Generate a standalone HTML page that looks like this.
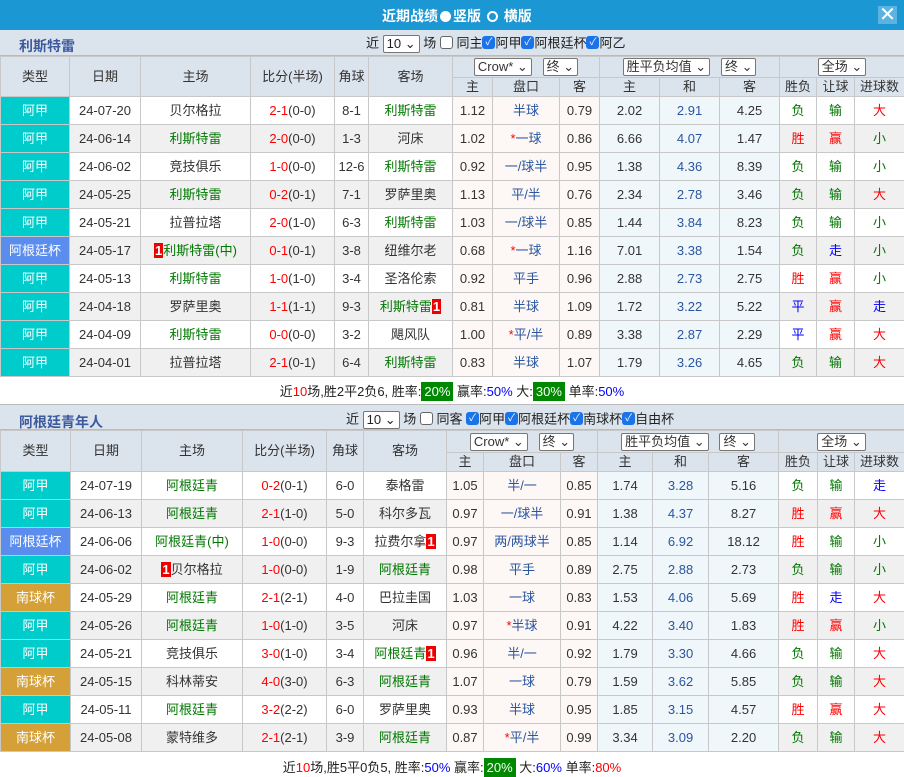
<!DOCTYPE html>
<html><head><meta charset="utf-8"><style>
*{margin:0;padding:0;box-sizing:border-box}
body{width:904px;height:776px;overflow:hidden;background:#fff;font-family:"Liberation Sans","Noto Sans CJK SC",sans-serif;font-size:13px;color:#333;position:relative}
.top{position:absolute;left:0;top:0;width:904px;height:30px;background:#1b97d4;color:#fff;font-weight:bold;font-size:14px}
.top .t{position:absolute;left:382px;top:6px;white-space:nowrap}
.rad{display:inline-block;width:11px;height:11px;border-radius:50%;background:#fff;vertical-align:-1px;margin:0 2px}
.rad.o{background:none;border:2px solid #fff}
.x{position:absolute;left:878px;top:6px;width:19px;height:18px;background:#5cb3e2;color:#fff;font-size:20px;line-height:18px;text-align:center;font-weight:normal}
.sh{position:absolute;left:0;width:904px;height:26px;background:#dbe3ec;border-bottom:1px solid #bbb}
.sh b{position:absolute;left:19px;top:6px;color:#3d5a9e;font-size:14px}
.sh .c{position:absolute;top:5px;white-space:nowrap;font-size:13px;color:#222;line-height:16px}
.sel{display:inline-block;border:1px solid #777;background:#fff;height:18px;line-height:16px;padding:0 3px;font-size:13px;vertical-align:middle;border-radius:2px}
.cb{display:inline-block;width:13px;height:13px;border-radius:3px;vertical-align:-2px;background:#1a73e8;color:#fff;font-size:10px;line-height:13px;text-align:center;overflow:hidden}
.cb.e{background:#fff;border:1px solid #666}
table{position:absolute;left:0;border-collapse:collapse;table-layout:fixed;width:904px}
td{border:1px solid #c8c8c8;text-align:center;white-space:nowrap;overflow:hidden;height:28px;padding:0;line-height:16px}
thead td{background:#dbe3ec;color:#333;height:21px}
thead td.h2{height:19px}
.g{color:#070}.r{color:#f00}.b{color:#00f}.hb{color:#2a55a0}
.aj{background:#00cccc;color:#fff}.ag{background:#5b8def;color:#fff}.nq{background:#d4a037;color:#fff}
tbody tr:nth-child(even) td{background:#f0f0f0}
tbody td.p{background:#fdf8f5!important}
tbody td.q{background:#f0f7fb!important}
tbody tr td.aj{background:#00cccc!important}tbody tr td.ag{background:#5b8def!important}tbody tr td.nq{background:#d4a037!important}
.n{background:#e00;color:#fff;font-weight:bold;padding:0 1px}
.sum{position:absolute;left:0;width:904px;text-align:center;font-size:13px;color:#222}
.gb{background:#080;color:#fff;padding:2px 3px}
</style></head><body>
<div class="top"><span class="t">近期战绩<span class="rad"></span>竖版 <span class="rad o"></span> 横版</span><div class="x">✕</div></div>
<div class="sh" style="top:30px"><b>利斯特雷</b><span class="c" style="left:366px">近 <span class="sel">10 ⌄</span> 场 <span class="cb e"></span> 同主<span class="cb">✓</span>阿甲<span class="cb">✓</span>阿根廷杯<span class="cb">✓</span>阿乙</span></div>
<table style="top:56px">
<colgroup><col style="width:69px"><col style="width:71px"><col style="width:110px"><col style="width:84px"><col style="width:34px"><col style="width:84px"><col style="width:40px"><col style="width:67px"><col style="width:40px"><col style="width:60px"><col style="width:60px"><col style="width:60px"><col style="width:37px"><col style="width:38px"><col style="width:50px"></colgroup>
<thead><tr><td rowspan="2">类型</td><td rowspan="2">日期</td><td rowspan="2">主场</td><td rowspan="2">比分(半场)</td><td rowspan="2">角球</td><td rowspan="2">客场</td><td colspan="3"><span class="sel">Crow* ⌄</span> &nbsp; <span class="sel">终 ⌄</span></td><td colspan="3"><span class="sel">胜平负均值 ⌄</span> &nbsp; <span class="sel">终 ⌄</span></td><td colspan="3"><span class="sel">全场 ⌄</span></td></tr>
<tr><td class="h2">主</td><td class="h2">盘口</td><td class="h2">客</td><td class="h2">主</td><td class="h2">和</td><td class="h2">客</td><td class="h2">胜负</td><td class="h2">让球</td><td class="h2">进球数</td></tr></thead>
<tbody>
<tr><td class="aj">阿甲</td><td>24-07-20</td><td>贝尔格拉</td><td><span class="r">2-1</span>(0-0)</td><td>8-1</td><td class="g">利斯特雷</td><td class="p">1.12</td><td class="p hb">半球</td><td class="p">0.79</td><td class="q">2.02</td><td class="q hb">2.91</td><td class="q">4.25</td><td class="g">负</td><td class="g">输</td><td class="r">大</td></tr>
<tr><td class="aj">阿甲</td><td>24-06-14</td><td class="g">利斯特雷</td><td><span class="r">2-0</span>(0-0)</td><td>1-3</td><td>河床</td><td class="p">1.02</td><td class="p hb"><span class="r">*</span>一球</td><td class="p">0.86</td><td class="q">6.66</td><td class="q hb">4.07</td><td class="q">1.47</td><td class="r">胜</td><td class="r">赢</td><td class="g">小</td></tr>
<tr><td class="aj">阿甲</td><td>24-06-02</td><td>竞技俱乐</td><td><span class="r">1-0</span>(0-0)</td><td>12-6</td><td class="g">利斯特雷</td><td class="p">0.92</td><td class="p hb">一/球半</td><td class="p">0.95</td><td class="q">1.38</td><td class="q hb">4.36</td><td class="q">8.39</td><td class="g">负</td><td class="g">输</td><td class="g">小</td></tr>
<tr><td class="aj">阿甲</td><td>24-05-25</td><td class="g">利斯特雷</td><td><span class="r">0-2</span>(0-1)</td><td>7-1</td><td>罗萨里奥</td><td class="p">1.13</td><td class="p hb">平/半</td><td class="p">0.76</td><td class="q">2.34</td><td class="q hb">2.78</td><td class="q">3.46</td><td class="g">负</td><td class="g">输</td><td class="r">大</td></tr>
<tr><td class="aj">阿甲</td><td>24-05-21</td><td>拉普拉塔</td><td><span class="r">2-0</span>(1-0)</td><td>6-3</td><td class="g">利斯特雷</td><td class="p">1.03</td><td class="p hb">一/球半</td><td class="p">0.85</td><td class="q">1.44</td><td class="q hb">3.84</td><td class="q">8.23</td><td class="g">负</td><td class="g">输</td><td class="g">小</td></tr>
<tr><td class="ag">阿根廷杯</td><td>24-05-17</td><td class="g"><span class="n">1</span>利斯特雷(中)</td><td><span class="r">0-1</span>(0-1)</td><td>3-8</td><td>纽维尔老</td><td class="p">0.68</td><td class="p hb"><span class="r">*</span>一球</td><td class="p">1.16</td><td class="q">7.01</td><td class="q hb">3.38</td><td class="q">1.54</td><td class="g">负</td><td class="b">走</td><td class="g">小</td></tr>
<tr><td class="aj">阿甲</td><td>24-05-13</td><td class="g">利斯特雷</td><td><span class="r">1-0</span>(1-0)</td><td>3-4</td><td>圣洛伦索</td><td class="p">0.92</td><td class="p hb">平手</td><td class="p">0.96</td><td class="q">2.88</td><td class="q hb">2.73</td><td class="q">2.75</td><td class="r">胜</td><td class="r">赢</td><td class="g">小</td></tr>
<tr><td class="aj">阿甲</td><td>24-04-18</td><td>罗萨里奥</td><td><span class="r">1-1</span>(1-1)</td><td>9-3</td><td class="g">利斯特雷<span class="n">1</span></td><td class="p">0.81</td><td class="p hb">半球</td><td class="p">1.09</td><td class="q">1.72</td><td class="q hb">3.22</td><td class="q">5.22</td><td class="b">平</td><td class="r">赢</td><td class="b">走</td></tr>
<tr><td class="aj">阿甲</td><td>24-04-09</td><td class="g">利斯特雷</td><td><span class="r">0-0</span>(0-0)</td><td>3-2</td><td>飓风队</td><td class="p">1.00</td><td class="p hb"><span class="r">*</span>平/半</td><td class="p">0.89</td><td class="q">3.38</td><td class="q hb">2.87</td><td class="q">2.29</td><td class="b">平</td><td class="r">赢</td><td class="r">大</td></tr>
<tr><td class="aj">阿甲</td><td>24-04-01</td><td>拉普拉塔</td><td><span class="r">2-1</span>(0-1)</td><td>6-4</td><td class="g">利斯特雷</td><td class="p">0.83</td><td class="p hb">半球</td><td class="p">1.07</td><td class="q">1.79</td><td class="q hb">3.26</td><td class="q">4.65</td><td class="g">负</td><td class="g">输</td><td class="r">大</td></tr>
</tbody></table>
<div class="sum" style="top:381px">近<span class="r">10</span>场,胜2平2负6, 胜率:<span class="gb">20%</span> 赢率:<span class="b">50%</span> 大:<span class="gb">30%</span> 单率:<span class="b">50%</span></div>
<div class="sh" style="top:404px;border-top:1px solid #bbb"><b style="top:7px">阿根廷青年人</b><span class="c" style="left:346px;top:6px">近 <span class="sel">10 ⌄</span> 场 <span class="cb e"></span> 同客 <span class="cb">✓</span>阿甲<span class="cb">✓</span>阿根廷杯<span class="cb">✓</span>南球杯<span class="cb">✓</span>自由杯</span></div>
<table style="top:430px">
<colgroup><col style="width:70px"><col style="width:71px"><col style="width:101px"><col style="width:84px"><col style="width:37px"><col style="width:83px"><col style="width:37px"><col style="width:77px"><col style="width:37px"><col style="width:55px"><col style="width:56px"><col style="width:70px"><col style="width:39px"><col style="width:37px"><col style="width:50px"></colgroup>
<thead><tr><td rowspan="2">类型</td><td rowspan="2">日期</td><td rowspan="2">主场</td><td rowspan="2">比分(半场)</td><td rowspan="2">角球</td><td rowspan="2">客场</td><td colspan="3" style="height:22px"><span class="sel">Crow* ⌄</span> &nbsp; <span class="sel">终 ⌄</span></td><td colspan="3"><span class="sel">胜平负均值 ⌄</span> &nbsp; <span class="sel">终 ⌄</span></td><td colspan="3"><span class="sel">全场 ⌄</span></td></tr>
<tr><td class="h2" style="height:19px">主</td><td class="h2">盘口</td><td class="h2">客</td><td class="h2">主</td><td class="h2">和</td><td class="h2">客</td><td class="h2">胜负</td><td class="h2">让球</td><td class="h2">进球数</td></tr></thead>
<tbody>
<tr><td class="aj">阿甲</td><td>24-07-19</td><td class="g">阿根廷青</td><td><span class="r">0-2</span>(0-1)</td><td>6-0</td><td>泰格雷</td><td class="p">1.05</td><td class="p hb">半/一</td><td class="p">0.85</td><td class="q">1.74</td><td class="q hb">3.28</td><td class="q">5.16</td><td class="g">负</td><td class="g">输</td><td class="b">走</td></tr>
<tr><td class="aj">阿甲</td><td>24-06-13</td><td class="g">阿根廷青</td><td><span class="r">2-1</span>(1-0)</td><td>5-0</td><td>科尔多瓦</td><td class="p">0.97</td><td class="p hb">一/球半</td><td class="p">0.91</td><td class="q">1.38</td><td class="q hb">4.37</td><td class="q">8.27</td><td class="r">胜</td><td class="r">赢</td><td class="r">大</td></tr>
<tr><td class="ag">阿根廷杯</td><td>24-06-06</td><td class="g">阿根廷青(中)</td><td><span class="r">1-0</span>(0-0)</td><td>9-3</td><td>拉费尔拿<span class="n">1</span></td><td class="p">0.97</td><td class="p hb">两/两球半</td><td class="p">0.85</td><td class="q">1.14</td><td class="q hb">6.92</td><td class="q">18.12</td><td class="r">胜</td><td class="g">输</td><td class="g">小</td></tr>
<tr><td class="aj">阿甲</td><td>24-06-02</td><td><span class="n">1</span>贝尔格拉</td><td><span class="r">1-0</span>(0-0)</td><td>1-9</td><td class="g">阿根廷青</td><td class="p">0.98</td><td class="p hb">平手</td><td class="p">0.89</td><td class="q">2.75</td><td class="q hb">2.88</td><td class="q">2.73</td><td class="g">负</td><td class="g">输</td><td class="g">小</td></tr>
<tr><td class="nq">南球杯</td><td>24-05-29</td><td class="g">阿根廷青</td><td><span class="r">2-1</span>(2-1)</td><td>4-0</td><td>巴拉圭国</td><td class="p">1.03</td><td class="p hb">一球</td><td class="p">0.83</td><td class="q">1.53</td><td class="q hb">4.06</td><td class="q">5.69</td><td class="r">胜</td><td class="b">走</td><td class="r">大</td></tr>
<tr><td class="aj">阿甲</td><td>24-05-26</td><td class="g">阿根廷青</td><td><span class="r">1-0</span>(1-0)</td><td>3-5</td><td>河床</td><td class="p">0.97</td><td class="p hb"><span class="r">*</span>半球</td><td class="p">0.91</td><td class="q">4.22</td><td class="q hb">3.40</td><td class="q">1.83</td><td class="r">胜</td><td class="r">赢</td><td class="g">小</td></tr>
<tr><td class="aj">阿甲</td><td>24-05-21</td><td>竞技俱乐</td><td><span class="r">3-0</span>(1-0)</td><td>3-4</td><td class="g">阿根廷青<span class="n">1</span></td><td class="p">0.96</td><td class="p hb">半/一</td><td class="p">0.92</td><td class="q">1.79</td><td class="q hb">3.30</td><td class="q">4.66</td><td class="g">负</td><td class="g">输</td><td class="r">大</td></tr>
<tr><td class="nq">南球杯</td><td>24-05-15</td><td>科林蒂安</td><td><span class="r">4-0</span>(3-0)</td><td>6-3</td><td class="g">阿根廷青</td><td class="p">1.07</td><td class="p hb">一球</td><td class="p">0.79</td><td class="q">1.59</td><td class="q hb">3.62</td><td class="q">5.85</td><td class="g">负</td><td class="g">输</td><td class="r">大</td></tr>
<tr><td class="aj">阿甲</td><td>24-05-11</td><td class="g">阿根廷青</td><td><span class="r">3-2</span>(2-2)</td><td>6-0</td><td>罗萨里奥</td><td class="p">0.93</td><td class="p hb">半球</td><td class="p">0.95</td><td class="q">1.85</td><td class="q hb">3.15</td><td class="q">4.57</td><td class="r">胜</td><td class="r">赢</td><td class="r">大</td></tr>
<tr><td class="nq">南球杯</td><td>24-05-08</td><td>蒙特维多</td><td><span class="r">2-1</span>(2-1)</td><td>3-9</td><td class="g">阿根廷青</td><td class="p">0.87</td><td class="p hb"><span class="r">*</span>平/半</td><td class="p">0.99</td><td class="q">3.34</td><td class="q hb">3.09</td><td class="q">2.20</td><td class="g">负</td><td class="g">输</td><td class="r">大</td></tr>
</tbody></table>
<div class="sum" style="top:757px">近<span class="r">10</span>场,胜5平0负5, 胜率:<span class="b">50%</span> 赢率:<span class="gb">20%</span> 大:<span class="b">60%</span> 单率:<span class="r">80%</span></div>
</body></html>
